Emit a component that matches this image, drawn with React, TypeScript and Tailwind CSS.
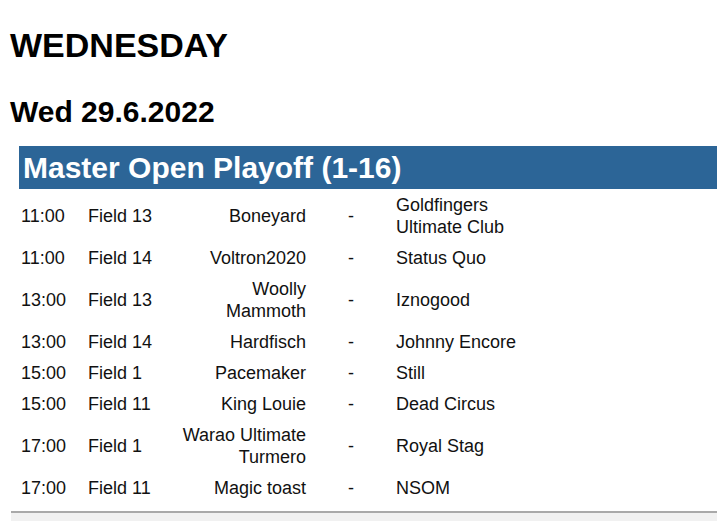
import React from "react";

type Game = { time: string; field: string; home: string; away: string };

const games: Game[] = [
  { time: "11:00", field: "Field 13", home: "Boneyard", away: "Goldfingers Ultimate Club" },
  { time: "11:00", field: "Field 14", home: "Voltron2020", away: "Status Quo" },
  { time: "13:00", field: "Field 13", home: "Woolly Mammoth", away: "Iznogood" },
  { time: "13:00", field: "Field 14", home: "Hardfisch", away: "Johnny Encore" },
  { time: "15:00", field: "Field 1", home: "Pacemaker", away: "Still" },
  { time: "15:00", field: "Field 11", home: "King Louie", away: "Dead Circus" },
  { time: "17:00", field: "Field 1", home: "Warao Ultimate Turmero", away: "Royal Stag" },
  { time: "17:00", field: "Field 11", home: "Magic toast", away: "NSOM" },
];

export default function App() {
  return (
    <div className="min-h-screen bg-white text-black font-['Liberation_Sans',Arial,sans-serif] overflow-hidden">
      <div className="pl-[10px]">
        <h1 className="pt-[26px] text-[34px] leading-[38px] font-bold">WEDNESDAY</h1>
        <h2 className="mt-[31px] text-[30px] leading-[33px] font-bold">Wed 29.6.2022</h2>
      </div>
      <div className="ml-[19px] mt-[18px]">
        <div className="h-[43px] bg-[#2c6597] flex items-center pl-[4px]">
          <span className="text-white font-bold text-[30px] leading-[33px]">Master Open Playoff (1-16)</span>
        </div>
        <div className="pl-[2px] text-[18px] leading-[22px] text-[#111]">
          {games.map((g, i) => (
            <div key={i} className="flex items-center py-[4.5px]">
              <div className="w-[67px] shrink-0">{g.time}</div>
              <div className="w-[88px] shrink-0">{g.field}</div>
              <div className="w-[130px] shrink-0 text-right">{g.home}</div>
              <div className="w-[90px] shrink-0 text-center">-</div>
              <div className="w-[150px] shrink-0">{g.away}</div>
            </div>
          ))}
        </div>
      </div>
      <div className="ml-[11px] mt-[8px] border-t-2 border-[#a9a9a9] bg-[#f1f1f1] h-[20px]"></div>
    </div>
  );
}
